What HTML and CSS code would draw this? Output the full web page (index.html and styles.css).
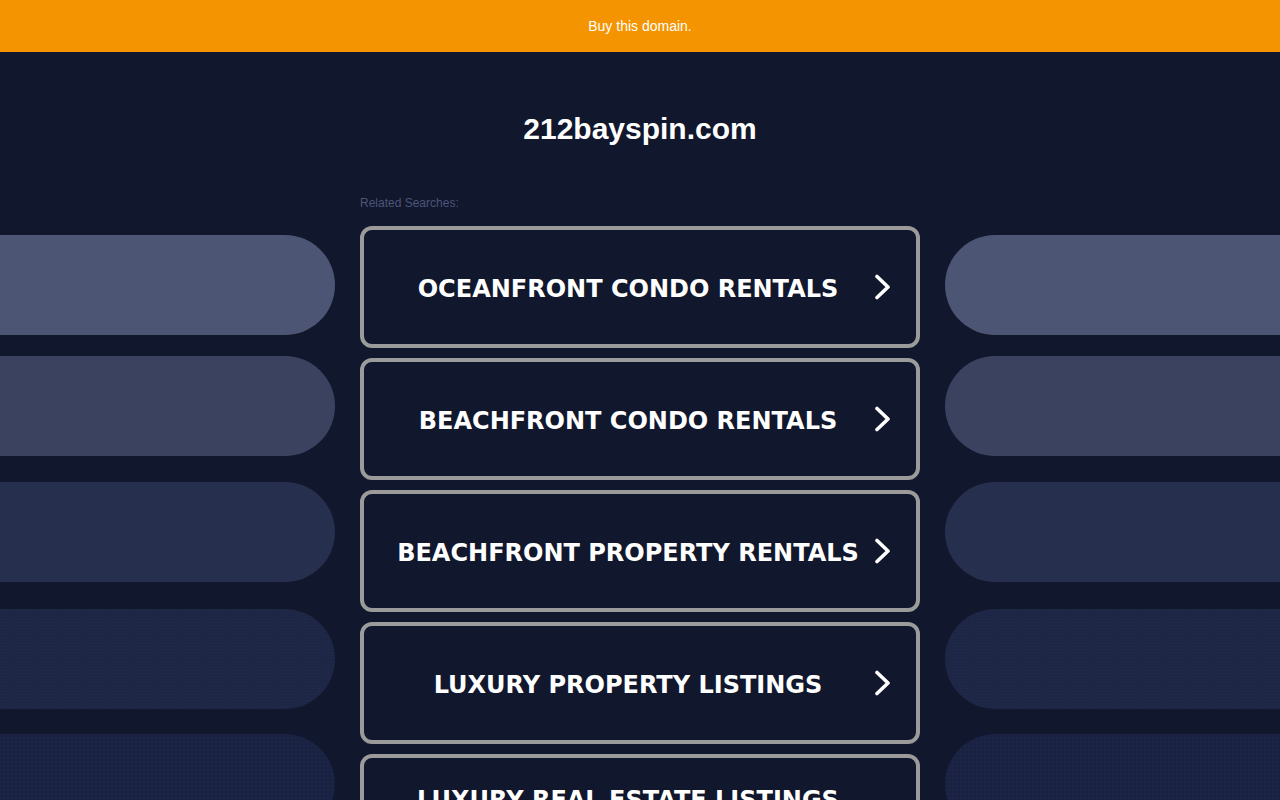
FILE: index.html
```html
<!DOCTYPE html>
<html lang="en">
<head>
<meta charset="utf-8">
<title>212bayspin.com</title>
<link rel="stylesheet" href="styles.css">
</head>
<body>
<div class="topbar"><a class="buy" href="#">Buy this domain.</a></div>
<div class="main">
  <div class="side side-left">
    <div class="pill p1"></div>
    <div class="pill p2"></div>
    <div class="pill p3"></div>
    <div class="pill p4"></div>
    <div class="pill p5"></div>
  </div>
  <div class="center">
    <h1 class="title">212bayspin.com</h1>
    <div class="label">Related Searches:</div>
    <div class="list">
      <a class="item" href="#"><span class="txt">OCEANFRONT CONDO RENTALS</span><svg class="chev" width="15" height="26" viewBox="0 0 15 26"><polyline points="2,2.5 13,13 2,23.5" fill="none" stroke="#fff" stroke-width="3.6" stroke-linecap="round" stroke-linejoin="round"/></svg></a>
      <a class="item" href="#"><span class="txt">BEACHFRONT CONDO RENTALS</span><svg class="chev" width="15" height="26" viewBox="0 0 15 26"><polyline points="2,2.5 13,13 2,23.5" fill="none" stroke="#fff" stroke-width="3.6" stroke-linecap="round" stroke-linejoin="round"/></svg></a>
      <a class="item" href="#"><span class="txt">BEACHFRONT PROPERTY RENTALS</span><svg class="chev" width="15" height="26" viewBox="0 0 15 26"><polyline points="2,2.5 13,13 2,23.5" fill="none" stroke="#fff" stroke-width="3.6" stroke-linecap="round" stroke-linejoin="round"/></svg></a>
      <a class="item" href="#"><span class="txt">LUXURY PROPERTY LISTINGS</span><svg class="chev" width="15" height="26" viewBox="0 0 15 26"><polyline points="2,2.5 13,13 2,23.5" fill="none" stroke="#fff" stroke-width="3.6" stroke-linecap="round" stroke-linejoin="round"/></svg></a>
      <a class="item" href="#"><span class="txt txt-high">LUXURY REAL ESTATE LISTINGS</span><svg class="chev" width="15" height="26" viewBox="0 0 15 26"><polyline points="2,2.5 13,13 2,23.5" fill="none" stroke="#fff" stroke-width="3.6" stroke-linecap="round" stroke-linejoin="round"/></svg></a>
    </div>
  </div>
  <div class="side side-right">
    <div class="pill p1"></div>
    <div class="pill p2"></div>
    <div class="pill p3"></div>
    <div class="pill p4"></div>
    <div class="pill p5"></div>
  </div>
</div>
</body>
</html>
```

FILE: styles.css
```css
html, body {
  margin: 0;
  padding: 0;
  height: 800px;
  overflow: hidden;
}
body {
  background: #11172c;
  font-family: "Liberation Sans", Arial, sans-serif;
}
.topbar {
  height: 52px;
  background: #f39400;
  display: flex;
  align-items: center;
  justify-content: center;
}
.buy {
  color: #ffffff;
  font-size: 14px;
  text-decoration: none;
  line-height: 16px;
}
.main {
  display: grid;
  grid-template-columns: 335px 560px 335px;
  column-gap: 25px;
  align-items: start;
}
.side {
  display: flex;
  flex-direction: column;
  padding-top: 183px;
}
.pill {
  height: 100px;
  flex: none;
}
.side-left .pill {
  border-radius: 0 50px 50px 0;
}
.side-right .pill {
  border-radius: 50px 0 0 50px;
}
.p1 { background-color: #4c5573; }
.p2 { background-color: #3a4260; margin-top: 21px; }
.p3 { background-color: #272f4e; margin-top: 26px; }
.p4 {
  margin-top: 27px;
  background-color: #1e2646;
  background-image: radial-gradient(rgba(120, 135, 190, 0.06) 0.7px, transparent 0.9px);
  background-size: 3px 3px;
}
.p5 {
  margin-top: 25px;
  background-color: #1c2445;
  background-image: radial-gradient(rgba(10, 15, 35, 0.18) 0.7px, transparent 0.9px);
  background-size: 4px 4px;
}
.center {
  display: flex;
  flex-direction: column;
}
.title {
  margin: 59px 0 0;
  font-size: 30px;
  line-height: 36px;
  font-weight: bold;
  color: #ffffff;
  text-align: center;
}
.label {
  margin-top: 49px;
  font-size: 12px;
  line-height: 14px;
  color: #4c5578;
}
.list {
  margin-top: 16px;
  display: flex;
  flex-direction: column;
  gap: 10px;
}
.item {
  height: 122px;
  flex: none;
  box-sizing: border-box;
  border: 4px solid #9b9b9b;
  border-radius: 12px;
  background: #11172c;
  display: flex;
  align-items: center;
  padding: 0 26px 0 0;
  text-decoration: none;
  color: #ffffff;
}
.txt {
  flex: 1;
  text-align: center;
  font-family: "DejaVu Sans", Verdana, sans-serif;
  font-weight: bold;
  font-size: 24px;
  line-height: 30px;
  padding-top: 3px;
  white-space: nowrap;
}
.txt-high {
  padding-top: 0;
  padding-bottom: 30px;
}
.chev {
  flex: none;
  margin-left: -17px;
  display: block;
}
```
